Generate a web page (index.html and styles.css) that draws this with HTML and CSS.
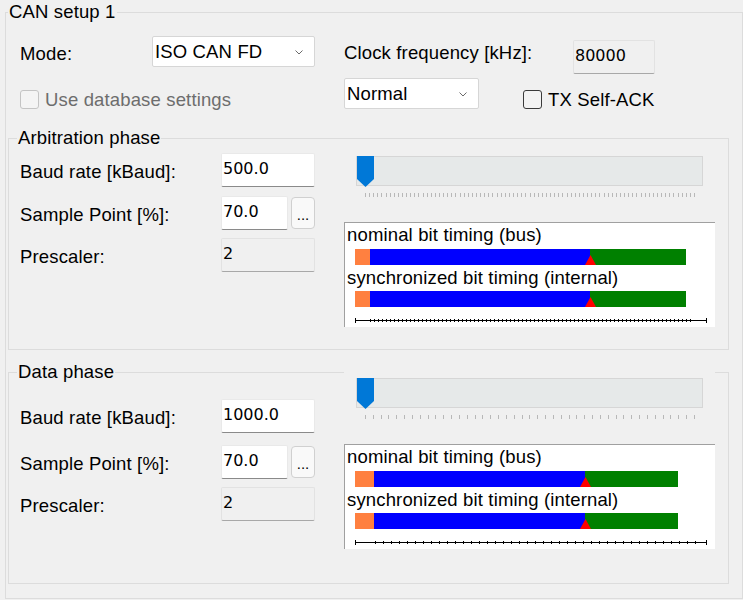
FILE: index.html
```html
<!DOCTYPE html>
<html>
<head>
<meta charset="utf-8">
<title>CAN setup</title>
<link rel="stylesheet" href="styles.css">
</head>
<body>
<fieldset class="group group-outer">
  <legend>CAN setup 1</legend>
  <div class="top">
    <span class="lbl lbl-mode">Mode:</span>
    <div class="combo combo-mode"><span>ISO CAN FD</span><svg class="chev" width="8" height="5" viewBox="0 0 8 5"><polyline points="0.5,0.5 4,4 7.5,0.5" fill="none" stroke="#6a6a6a" stroke-width="1"/></svg></div>
    <span class="lbl lbl-clock">Clock frequency [kHz]:</span>
    <div class="tbox ro clock">80000</div>
    <label class="check disabled use-db"><span class="box"></span>Use database settings</label>
    <div class="row2-right">
      <div class="combo combo-normal"><span>Normal</span><svg class="chev" width="8" height="5" viewBox="0 0 8 5"><polyline points="0.5,0.5 4,4 7.5,0.5" fill="none" stroke="#6a6a6a" stroke-width="1"/></svg></div>
      <label class="check tx"><span class="box"></span>TX Self-ACK</label>
    </div>
  </div>

  <fieldset class="group phase phase-arb">
    <legend>Arbitration phase</legend>
    <div class="phase-grid">
      <div class="form">
        <div class="frow frow-baud"><span class="lbl">Baud rate [kBaud]:</span><div class="tbox w-full">500.0</div></div>
        <div class="frow"><span class="lbl">Sample Point [%]:</span><div class="tbox w-short">70.0</div><div class="dots">...</div></div>
        <div class="frow"><span class="lbl">Prescaler:</span><div class="tbox ro w-full">2</div></div>
      </div>
      <div class="right">
        <div class="slider">
          <div class="track"><svg class="thumb" viewBox="0 0 17 31"><path d="M0 0H17V23L8.5 31L0 23Z" fill="#0078d7"/></svg></div>
          <div class="ticks ticks-arb"></div>
        </div>
        <div class="timing">
          <div class="tlabel">nominal bit timing (bus)</div>
          <div class="bar"><span class="seg sync" style="width:15px"></span><span class="seg prop" style="width:220px"></span><span class="seg ps2" style="width:96px"></span></div>
          <div class="tlabel tlabel-sync">synchronized bit timing (internal)</div>
          <div class="bar bar-sync"><span class="seg sync" style="width:15px"></span><span class="seg prop" style="width:220px"></span><span class="seg ps2" style="width:96px"></span></div>
          <div class="axis axis-arb"></div>
        </div>
      </div>
    </div>
  </fieldset>

  <fieldset class="group phase phase-data">
    <legend>Data phase</legend>
    <div class="phase-grid">
      <div class="form">
        <div class="frow frow-baud"><span class="lbl">Baud rate [kBaud]:</span><div class="tbox w-full">1000.0</div></div>
        <div class="frow"><span class="lbl">Sample Point [%]:</span><div class="tbox w-short">70.0</div><div class="dots">...</div></div>
        <div class="frow"><span class="lbl">Prescaler:</span><div class="tbox ro w-full">2</div></div>
      </div>
      <div class="right">
        <div class="slider">
          <div class="track"><svg class="thumb" viewBox="0 0 17 31"><path d="M0 0H17V23L8.5 31L0 23Z" fill="#0078d7"/></svg></div>
          <div class="ticks ticks-data"></div>
        </div>
        <div class="timing">
          <div class="tlabel">nominal bit timing (bus)</div>
          <div class="bar"><span class="seg sync" style="width:19px"></span><span class="seg prop" style="width:211px"></span><span class="seg ps2" style="width:93px"></span></div>
          <div class="tlabel tlabel-sync">synchronized bit timing (internal)</div>
          <div class="bar bar-sync"><span class="seg sync" style="width:19px"></span><span class="seg prop" style="width:211px"></span><span class="seg ps2" style="width:93px"></span></div>
          <div class="axis axis-data"></div>
        </div>
      </div>
    </div>
  </fieldset>
</fieldset>
</body>
</html>
```

FILE: styles.css
```css
* { box-sizing: border-box; }

html, body { margin: 0; }

body {
  background: #f0f0f0;
  font-family: "Liberation Sans", Arial, sans-serif;
  font-size: 18.5px;
  letter-spacing: 0.15px;
  color: #000;
  overflow: hidden;
  height: 600px;
}

/* group boxes */
.group {
  border: 1px solid #dcdcdc;
  margin: 0;
  min-width: 0;
  min-inline-size: 0;
}
.group > legend {
  font-size: 18.5px;
  line-height: 18px;
  padding: 0 1px;
  white-space: nowrap;
}
.group-outer {
  margin: 3px 0 0 5px;
  padding: 15px 13px 14px 2px;
}
.phase {
  padding: 0 12px 22px 11px;
}
.phase > legend { margin-left: -3px; }
.phase-arb { margin-top: 19px; }
.phase-data { margin-top: 13px; padding-bottom: 34px; }

/* top section */
.top {
  display: grid;
  grid-template-columns: 132px 164px 28px 229px 82px;
  grid-template-rows: 38px 36px;
  padding-left: 12px;
}
.lbl { line-height: 21px; white-space: nowrap; }
.lbl-mode { grid-column: 1; grid-row: 1; margin-top: 7px; }
.combo-mode { grid-column: 2; grid-row: 1; width: 163px; }
.lbl-clock { grid-column: 4; grid-row: 1; margin-top: 6px; }
.clock { grid-column: 5; grid-row: 1; margin-top: 4px; width: 82px; }
.use-db { grid-column: 1 / span 2; grid-row: 2; margin-top: 15px; align-self: start; }
.row2-right { grid-column: 4 / span 2; grid-row: 2; display: flex; align-items: flex-start; }
.combo-normal { margin-top: 4px; width: 135px; padding-top: 5px; }
.tx { margin-left: 44px; margin-top: 15px; }

/* combo box */
.combo {
  height: 31px;
  background: #fff;
  border: 1px solid #d6d6d6;
  border-radius: 2px;
  padding: 4px 11px 0 2px;
  line-height: 21px;
  display: flex;
  justify-content: space-between;
  align-items: flex-start;
  white-space: nowrap;
}
.chev { display: block; align-self: center; margin-top: -3px; }

/* checkbox */
.check {
  display: flex;
  align-items: center;
  line-height: 21px;
  white-space: nowrap;
}
.check .box {
  flex: none;
  width: 19px;
  height: 19px;
  margin-right: 6px;
  border: 1px solid #3a3a3a;
  border-radius: 3px;
  background: #f3f3f3;
}
.check.disabled { color: #6d6d6d; }
.check.disabled .box { border-color: #c4c4c4; background: #f4f4f4; }

/* text boxes */
.tbox {
  height: 34px;
  background: #fff;
  border: 1px solid #e9e9e9;
  border-bottom-color: #8a8a8a;
  border-radius: 2px;
  padding: 6px 1px 0;
  font-family: "DejaVu Sans", sans-serif;
  font-size: 16px;
  letter-spacing: 0;
  line-height: 18px;
  white-space: nowrap;
}
.tbox.ro {
  background: #f0f0f0;
  border-color: #e2e2e2;
  border-bottom-color: #a8a8a8;
}
.w-full { width: 94px; }
.w-short { width: 67px; }
.dots {
  width: 24px;
  height: 32px;
  margin: 1px 0 0 3px;
  border: 1px solid #d0d0d0;
  border-radius: 4px;
  background: #f9f9f9;
  font-size: 15px;
  letter-spacing: 0;
  line-height: 1;
  display: flex;
  justify-content: center;
  align-items: flex-end;
  padding-bottom: 6px;
}

/* phase layout */
.phase-grid {
  display: grid;
  grid-template-columns: 295px 371px;
  column-gap: 29px;
  align-items: start;
}
.form { display: flex; flex-direction: column; gap: 8px; }
.frow { display: flex; align-items: flex-start; }
.frow .lbl { width: 201px; padding-top: 8px; }
.phase-arb .form { margin-top: 6px; }
.phase-arb .frow-baud { margin-bottom: 1px; }
.phase-data .form { margin-top: 18px; }
.phase-data .frow-baud { margin-bottom: 4px; }

.right { display: flex; flex-direction: column; }
.phase-arb .slider { margin-top: 1px; }
.phase-data .slider { margin-top: -11px; }

/* slider */
.slider {
  position: relative;
  z-index: 1;
  height: 74px;
  padding-top: 8px;
  background: #f0f0f0;
}
.track {
  position: relative;
  height: 30px;
  margin: 0 12px;
  border: 1px solid #d6d6d6;
  background: #e6e9e9;
}
.thumb {
  position: absolute;
  left: 0;
  top: -1px;
  width: 17px;
  height: 31px;
  display: block;
}
.ticks {
  height: 4px;
  width: 330px;
  margin: 7px 0 0 21px;
}
.ticks-arb { background: repeating-linear-gradient(to right, #b8b8b8 0 1px, transparent 1px 4.1125px); }
.ticks-data { background: repeating-linear-gradient(to right, #b8b8b8 0 1px, transparent 1px 7.833px); }

/* bit timing panel */
.timing {
  height: 105px;
  background: #fff;
  border-top: 1px solid #a0a0a0;
  border-left: 1px solid #a0a0a0;
  padding-top: 2px;
}
.tlabel { line-height: 20px; margin-left: 2px; white-space: nowrap; }
.tlabel-sync { margin-top: 3px; }
.bar { display: flex; height: 16px; margin: 4px 0 0 10px; }
.bar-sync { margin-top: 3px; }
.seg { display: block; height: 100%; }
.sync { background: #ff8040; }
.prop { background: #0000ff; }
.ps2 { background: #008000; position: relative; }
.ps2::before {
  content: "";
  position: absolute;
  left: -5px;
  bottom: 0;
  width: 11px;
  height: 10px;
  background: #ff0000;
  clip-path: polygon(50% 0, 100% 100%, 0 100%);
}

.axis {
  height: 5px;
  width: 352px;
  margin: 11px 0 0 10px;
  background:
    linear-gradient(#000, #000) 0 0 / 1px 5px no-repeat,
    linear-gradient(#000, #000) 351px 0 / 1px 5px no-repeat,
    repeating-linear-gradient(to right, #000 0 1px, transparent 1px var(--tq)) var(--off) 1px / 321px 3px no-repeat,
    linear-gradient(#000, #000) 0 2px / 100% 1px no-repeat;
}
.axis-arb { --tq: 4px; --off: 15px; }
.axis-data { --tq: 8px; --off: 20px; }
```
